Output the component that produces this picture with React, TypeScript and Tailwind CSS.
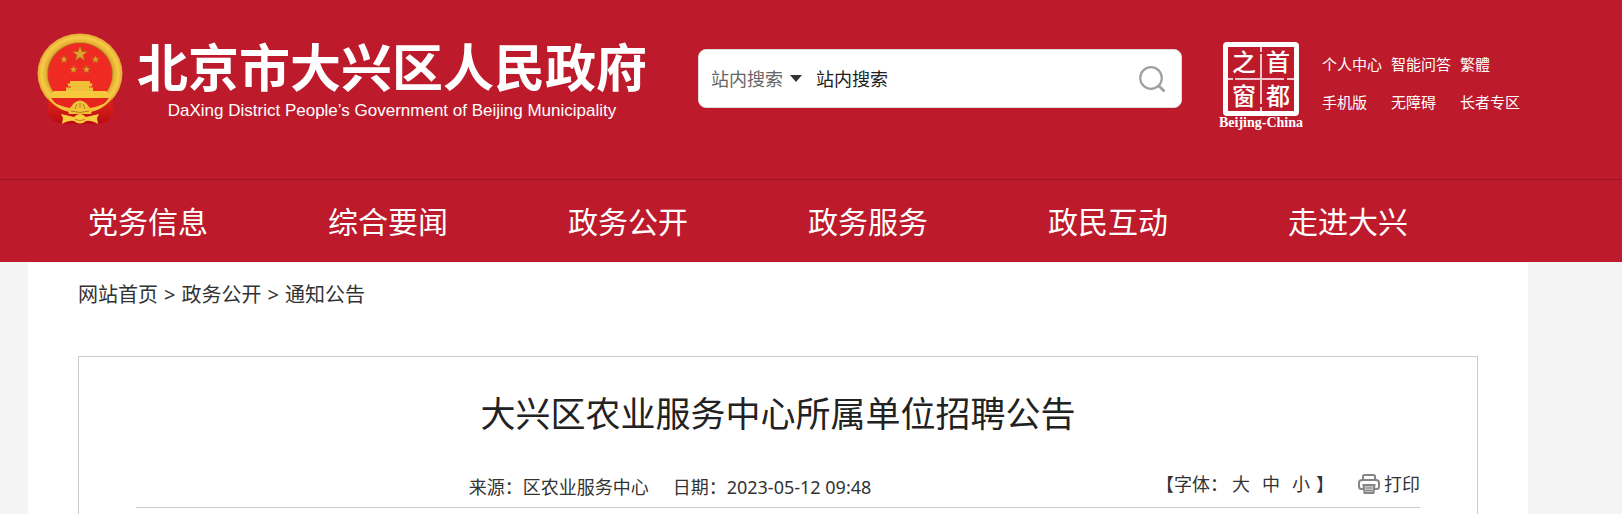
import React from "react";

const navItems = ["党务信息", "综合要闻", "政务公开", "政务服务", "政民互动", "走进大兴"];
const quickLinks = ["个人中心", "智能问答", "繁體", "手机版", "无障碍", "长者专区"];
const crumbs = ["网站首页", "政务公开", "通知公告"];

const STAR = "M0,-10 L2.4,-3.2 9.5,-3.1 3.8,1.3 5.9,8.1 0,4 -5.9,8.1 -3.8,1.3 -9.5,-3.1 -2.4,-3.2Z";

function Emblem() {
  const stars = [
    [43, 21, 0.8],
    [27, 26.5, 0.42],
    [58.5, 26.5, 0.42],
    [36.5, 36.5, 0.42],
    [49.5, 36.5, 0.42],
  ];
  return (
    <svg width="86" height="92" viewBox="0 0 86 92" role="img" aria-label="国徽" className="shrink-0">
      <defs>
        <radialGradient id="gold" cx="50%" cy="50%" r="50%">
          <stop offset="75%" stopColor="#a8701c" />
          <stop offset="79%" stopColor="#e5ac30" />
          <stop offset="90%" stopColor="#f6cb48" />
          <stop offset="100%" stopColor="#e3a930" />
        </radialGradient>
        <linearGradient id="drape" x1="0" x2="0" y1="0" y2="1">
          <stop offset="0" stopColor="#e3241d" />
          <stop offset="1" stopColor="#b80c12" />
        </linearGradient>
      </defs>
      <path d="M12 64l2 7 15 9h28l15-9 3-7 2 19-4 1-1 4-11 3H26l-10-3-2-4-4-1z" fill="url(#drape)" />
      <ellipse cx="43" cy="40.500" rx="42.500" ry="40" fill="url(#gold)" />
      <ellipse cx="43" cy="41.500" rx="32" ry="31.500" fill="#ee2a22" />
      {stars.map(([x, y, s]) => (
        <path key={`${x}-${y}`} d={STAR} fill="#dfa32b" stroke="#a8641a" strokeWidth="0.8" transform={`translate(${x} ${y}) scale(${s})`} />
      ))}
      <path d="M33 48h20v2.500h2.500l-1 3H52v1h4v3.500H29v-3.500h5v-1h-2.500l-1-3H33z" fill="#f0bf38" />
      <path d="M17 58h52l3 3v4H14v-4z" fill="#f6c93c" />
      <path d="M14 65h58l-5 6-14 5H33L19 71z" fill="#e8241f" />
      <path d="M12 65q7 8 21 10l4-5q6-5 12 0l4 5q14-2 21-10l1 6q-8 8-22 10H33Q19 79 11 71z" fill="#f4c23a" />
      <path d="M11 66q10 11 21 13l-6 12-10-3-2-4-4-1z" fill="url(#drape)" />
      <path d="M75 66q-10 11-21 13l6 12 10-3 2-4 4-1z" fill="url(#drape)" />
      <path d="M38 76l2-5M43 75v-5M48 76l-2-5M34 78q9 3 18 0" stroke="#b9781b" strokeWidth="1" fill="none" />
      <path d="M24 81l13 3q6-6 12 0l13-3-2 4 1 6q-7-4-12-3-6 5-12 0-5-1-12 3l1-6z" fill="#f8cc3c" />
      <path d="M38 86q5 3 10 0" stroke="#d6861e" strokeWidth="1.200" fill="none" />
    </svg>
  );
}

function CapitalWindow() {
  return (
    <svg
      width="84"
      height="88"
      viewBox="0 0 84 88"
      className="block shrink-0"
      fill="#fff"
      fontFamily="'Liberation Serif','Noto Sans CJK SC',serif"
      fontWeight="700"
      textAnchor="middle"
    >
      <rect x="6.500" y="2.500" width="71" height="69" rx="1.500" fill="none" stroke="#fff" strokeWidth="5" />
      <path d="M42 5v5M42 12v50M42 65v5M9 37h5M16 37h49M68 37h8" stroke="#fff" strokeOpacity="0.75" strokeWidth="2" />
      <g fontSize="24" fontWeight="500" fontFamily="'Noto Sans CJK SC',sans-serif">
        <text x="25" y="29">之</text>
        <text x="59" y="29">首</text>
        <text x="25" y="63">窗</text>
        <text x="59" y="63">都</text>
      </g>
      <text x="42" y="85" fontSize="14">Beijing-China</text>
    </svg>
  );
}

function Printer() {
  return (
    <svg width="22" height="20" viewBox="0 0 22 20" fill="none" stroke="#858585" strokeWidth="2" aria-hidden="true">
      <path d="M5 6V2.500Q5 1 6.500 1h9Q17 1 17 2.500V6" />
      <path d="M5 15H3.500Q1 15 1 12.500V9q0-3 3-3h14q3 0 3 3v3.500q0 2.500-2.500 2.500H17" />
      <path d="M5.500 11h11l-1 8h-9z" fill="#c4c4c4" />
      <path d="M8 14h6M8 16.500h6" strokeWidth="1.200" />
    </svg>
  );
}

export default function App() {
  return (
    <div className="flex min-h-screen flex-col bg-[#f4f4f4] font-['Noto_Sans','Noto_Sans_CJK_SC',sans-serif] text-lg text-[#333]">
      <header className="bg-[#bd1a2c] text-white">
        <div className="flex h-[180px] items-start border-b border-[#a01323] pl-[37px]">
          <a href="#" className="flex pt-[33px]">
            <Emblem />
            <span className="ml-3.5 flex flex-col items-center pt-2">
              <span className="text-[51px] leading-[52px] font-bold whitespace-nowrap">北京市大兴区人民政府</span>
              <span className="mt-1.5 font-['Liberation_Sans',sans-serif] text-[17px] leading-6 whitespace-nowrap">
                DaXing District People’s Government of Beijing Municipality
              </span>
            </span>
          </a>
          <form className="mt-[49px] ml-[51px] flex h-[59px] w-[484px] items-center rounded-lg border border-[#ddd] bg-white pr-4 pl-3" onSubmit={(e) => e.preventDefault()}>
            <div className="flex shrink-0 items-center">
              <select aria-label="搜索范围" className="w-[79px] appearance-none bg-transparent text-lg text-[#666] outline-none">
                <option>站内搜索</option>
              </select>
              <svg width="12" height="7" viewBox="0 0 12 7" aria-hidden="true">
                <path d="M0 0h12L6 7z" fill="#333" />
              </svg>
            </div>
            <input aria-label="搜索内容" defaultValue="站内搜索" className="ml-3.5 min-w-0 flex-1 bg-transparent text-lg text-[#222] outline-none" />
            <button type="submit" aria-label="搜索">
              <svg width="26" height="26" viewBox="0 0 26 26" fill="none" stroke="#a0a0a0" strokeWidth="2.200" className="block">
                <circle cx="12" cy="12" r="10.800" />
                <path d="M19.500 19.500l6 6" strokeWidth="2.800" />
              </svg>
            </button>
          </form>
          <a href="#" aria-label="首都之窗" className="mt-[42px] ml-[37px]">
            <CapitalWindow />
          </a>
          <ul className="mt-[45px] ml-[19px] grid grid-cols-[69px_69px_69px] text-[15px] leading-[38px] whitespace-nowrap">
            {quickLinks.map((t) => (
              <li key={t}>
                <a href="#">{t}</a>
              </li>
            ))}
          </ul>
        </div>
        <nav className="ml-7 max-w-[1500px]">
          <ul className="flex pt-0.5 text-[30px] leading-[80px]">
            {navItems.map((t) => (
              <li key={t} className="w-60 text-center">
                <a href="#">{t}</a>
              </li>
            ))}
          </ul>
        </nav>
      </header>

      <main className="ml-7 flex w-full max-w-[1500px] flex-1 flex-col bg-white px-[50px]">
        <nav aria-label="当前位置" className="flex gap-1.5 pt-[17px] text-xl leading-8">
          {crumbs.map((t, i) => (
            <React.Fragment key={t}>
              {i > 0 && <span>&gt;</span>}
              <a href="#">{t}</a>
            </React.Fragment>
          ))}
        </nav>
        <article className="mt-[45px] flex-1 border border-b-0 border-[#ccc] px-[57px] pt-[27px]">
          <h1 className="text-center text-[35px] leading-[60px] text-[#222]">大兴区农业服务中心所属单位招聘公告</h1>
          <div className="mt-6 flex items-start border-b border-[#ccc] pb-1 leading-8 whitespace-nowrap">
            <p className="flex-1 pt-[3px] pl-12 text-center">
              来源：区农业服务中心<span className="ml-6">日期：2023-05-12 09:48</span>
            </p>
            <div className="flex items-center">
              <span>【字体：</span>
              <span className="ml-1 flex gap-3">
                <button type="button">大</button>
                <button type="button">中</button>
                <button type="button">小</button>
              </span>
              <span className="ml-1.5">】</span>
              <button type="button" className="ml-6 flex items-center gap-1">
                <Printer />
                打印
              </button>
            </div>
          </div>
        </article>
      </main>
    </div>
  );
}
